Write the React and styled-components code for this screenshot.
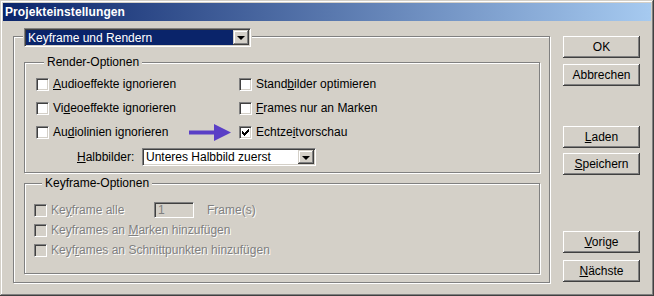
import React from 'react';
import styled, { createGlobalStyle } from 'styled-components';

const face = '#d4d0c8';
const shadow = '#808080';
const dark = '#404040';

const GlobalStyle = createGlobalStyle`
  html, body {
    margin: 0;
    padding: 0;
    background: ${face};
  }
  body {
    font-family: "Liberation Sans", Arial, sans-serif;
    font-size: 12px;
    color: #000;
  }
`;

const Window = styled.div`
  width: 654px;
  height: 296px;
  box-sizing: border-box;
  padding: 3px;
  background: ${face};
  display: flex;
  flex-direction: column;
  box-shadow: inset -1px -1px 0 ${dark}, inset 1px 1px 0 ${face},
    inset -2px -2px 0 ${shadow}, inset 2px 2px 0 #fff;
`;

const TitleBar = styled.div`
  height: 18px;
  flex: none;
  display: flex;
  align-items: center;
  padding-left: 2px;
  background: linear-gradient(to right, #0a246a, #a6caf0);
  color: #fff;
  font-weight: bold;
  font-size: 12px;
  letter-spacing: 0.1px;
`;

const Body = styled.div`
  display: flex;
  align-items: flex-start;
  padding: 15px 11px 0 10px;
`;

const OuterGroup = styled.div`
  width: 537px;
  height: 247px;
  box-sizing: border-box;
  border: 1px solid ${shadow};
  box-shadow: 1px 1px 0 #fff, inset 1px 1px 0 #fff;
  padding: 0 9px 0 10px;
  display: flex;
  flex-direction: column;
`;

const Group = styled.div`
  position: relative;
  height: ${p => p.$h}px;
  box-sizing: border-box;
  margin-top: ${p => p.$mt}px;
  border: 1px solid ${shadow};
  box-shadow: 1px 1px 0 #fff, inset 1px 1px 0 #fff;
  padding-left: ${p => p.$pl}px;
  display: flex;
  flex-direction: column;
`;

const Legend = styled.div`
  align-self: flex-start;
  margin: -8px 0 0 ${p => p.$ml}px;
  padding: 0 3px;
  height: 14px;
  line-height: 14px;
  background: ${face};
`;

const Combo = styled.div`
  display: flex;
  width: ${p => p.$w}px;
  height: ${p => p.$h}px;
  margin-top: ${p => p.$mt || 0}px;
  box-sizing: border-box;
  border-style: solid;
  border-width: 1px;
  border-color: ${shadow} #fff #fff ${shadow};
  background: ${p => (p.$selected ? '#0a246a' : '#fff')};
  box-shadow: inset 1px 1px 0 ${dark}, inset -1px -1px 0 ${face},
    0 0 0 1px ${face};
  padding: 1px;
`;

const ComboText = styled.div`
  flex: 1;
  display: flex;
  align-items: center;
  padding-left: 2px;
  color: ${p => (p.$selected ? '#fff' : '#000')};
  white-space: nowrap;
`;

const DropButton = styled.div`
  width: 16px;
  flex: none;
  background: ${face};
  display: flex;
  align-items: center;
  justify-content: center;
  box-shadow: inset -1px -1px 0 ${dark}, inset 1px 1px 0 ${face},
    inset -2px -2px 0 ${shadow}, inset 2px 2px 0 #fff;

  &::after {
    content: '';
    border-left: 4px solid transparent;
    border-right: 4px solid transparent;
    border-top: 4px solid #000;
    margin-top: 1px;
  }
`;

const OptionGrid = styled.div`
  display: grid;
  grid-template-columns: 203px 1fr;
  grid-auto-rows: 24px;
  margin-top: 3px;
`;

const Option = styled.label`
  display: flex;
  align-items: center;
  gap: 4px;
  white-space: nowrap;
  color: ${p => (p.$disabled ? shadow : '#000')};
  text-shadow: ${p => (p.$disabled ? '1px 1px 0 #fff' : 'none')};
`;

const Box = styled.span`
  width: 13px;
  height: 13px;
  flex: none;
  box-sizing: border-box;
  border-style: solid;
  border-width: 1px;
  border-color: ${shadow} #fff #fff ${shadow};
  box-shadow: inset 1px 1px 0 ${dark}, inset -1px -1px 0 ${face};
  background: ${p => (p.$disabled ? face : '#fff')};
  display: flex;
  align-items: center;
  justify-content: center;
  margin-top: 1px;
`;

const U = styled.span`
  text-decoration: underline;
  text-underline-offset: 1px;
`;

const FieldRow = styled.div`
  display: flex;
  align-items: center;
  margin-top: 4px;
  padding-left: 41px;
`;

const FieldLabel = styled.span`
  width: 65px;
  flex: none;
`;

const KeyRows = styled.div`
  display: flex;
  flex-direction: column;
  margin-top: 10px;
`;

const KeyRow = styled.div`
  height: 20px;
  display: flex;
  align-items: center;
`;

const KeyLabel = styled(Option)`
  width: 120px;
  flex: none;
`;

const NumField = styled.div`
  width: 40px;
  height: 16px;
  box-sizing: border-box;
  border-style: solid;
  border-width: 1px;
  border-color: ${shadow} #fff #fff ${shadow};
  box-shadow: inset 1px 1px 0 ${dark}, inset -1px -1px 0 ${face};
  padding: 0 0 0 3px;
  line-height: 14px;
  color: ${shadow};
`;

const Unit = styled.span`
  margin-left: 13px;
  color: ${shadow};
  text-shadow: 1px 1px 0 #fff;
`;

const ButtonColumn = styled.div`
  display: flex;
  flex-direction: column;
  width: 77px;
  margin-left: 13px;
`;

const Button = styled.div`
  height: 22px;
  margin-top: ${p => p.$mt || 0}px;
  display: flex;
  align-items: center;
  justify-content: center;
  background: ${face};
  box-shadow: inset -1px -1px 0 ${dark}, inset 1px 1px 0 #fff,
    inset -2px -2px 0 ${shadow};
`;

const Pointer = styled.svg`
  position: absolute;
  left: 164px;
  top: 61px;
`;

const Check = ({ checked, disabled }) => (
  <Box $disabled={disabled}>
    {checked && (
      <svg width="7" height="7" viewBox="0 0 7 7">
        <path d="M0 2h1v1h1v1h1v-1h1v-1h1v-1h1v-1h1v3h-1v1h-1v1h-1v1h-1v1h-1v-1h-1v-1h-1z" fill="#000" />
      </svg>
    )}
  </Box>
);

const Opt = ({ children, checked }) => (
  <Option>
    <Check checked={checked} />
    <span>{children}</span>
  </Option>
);

const App = () => (
  <>
    <GlobalStyle />
    <Window>
      <TitleBar>Projekteinstellungen</TitleBar>
      <Body>
        <OuterGroup>
          <Combo $w={227} $h={19} $mt={-9} $selected>
            <ComboText $selected>Keyframe und Rendern</ComboText>
            <DropButton />
          </Combo>

          <Group $h={111} $mt={15} $pl={11}>
            <Legend $ml={8}>Render-Optionen</Legend>
            <OptionGrid>
              <Opt><U>A</U>udioeffekte ignorieren</Opt>
              <Opt>Stand<U>b</U>ilder optimieren</Opt>
              <Opt>Vi<U>d</U>eoeffekte ignorieren</Opt>
              <Opt><U>F</U>rames nur an Marken</Opt>
              <Opt>Au<U>d</U>iolinien ignorieren</Opt>
              <Opt checked>Echtze<U>i</U>tvorschau</Opt>
            </OptionGrid>
            <FieldRow>
              <FieldLabel><U>H</U>albbilder:</FieldLabel>
              <Combo $w={174} $h={18}>
                <ComboText>Unteres Halbbild zuerst</ComboText>
                <DropButton />
              </Combo>
            </FieldRow>
            <Pointer width="44" height="18" viewBox="0 0 44 18">
              <path d="M0 6.5h25V0l17 8.5L25 17v-6.5H0z" fill="#5a3fc6" />
            </Pointer>
          </Group>

          <Group $h={91} $mt={10} $pl={9}>
            <Legend $ml={8}>Keyframe-Optionen</Legend>
            <KeyRows>
              <KeyRow>
                <KeyLabel $disabled>
                  <Check disabled />
                  <span>Ke<U>y</U>frame alle</span>
                </KeyLabel>
                <NumField>1</NumField>
                <Unit>Frame(s)</Unit>
              </KeyRow>
              <KeyRow>
                <Option $disabled>
                  <Check disabled />
                  <span>Keyframes an <U>M</U>arken hinzufügen</span>
                </Option>
              </KeyRow>
              <KeyRow>
                <Option $disabled>
                  <Check disabled />
                  <span>Keyf<U>r</U>ames an Schnittpunkten hinzufügen</span>
                </Option>
              </KeyRow>
            </KeyRows>
          </Group>
        </OuterGroup>

        <ButtonColumn>
          <Button>OK</Button>
          <Button $mt={6}>Abbrechen</Button>
          <Button $mt={40}><span><U>L</U>aden</span></Button>
          <Button $mt={5}><span><U>S</U>peichern</span></Button>
          <Button $mt={56}><span><U>V</U>orige</span></Button>
          <Button $mt={7}><span><U>N</U>ächste</span></Button>
        </ButtonColumn>
      </Body>
    </Window>
  </>
);

export default App;
